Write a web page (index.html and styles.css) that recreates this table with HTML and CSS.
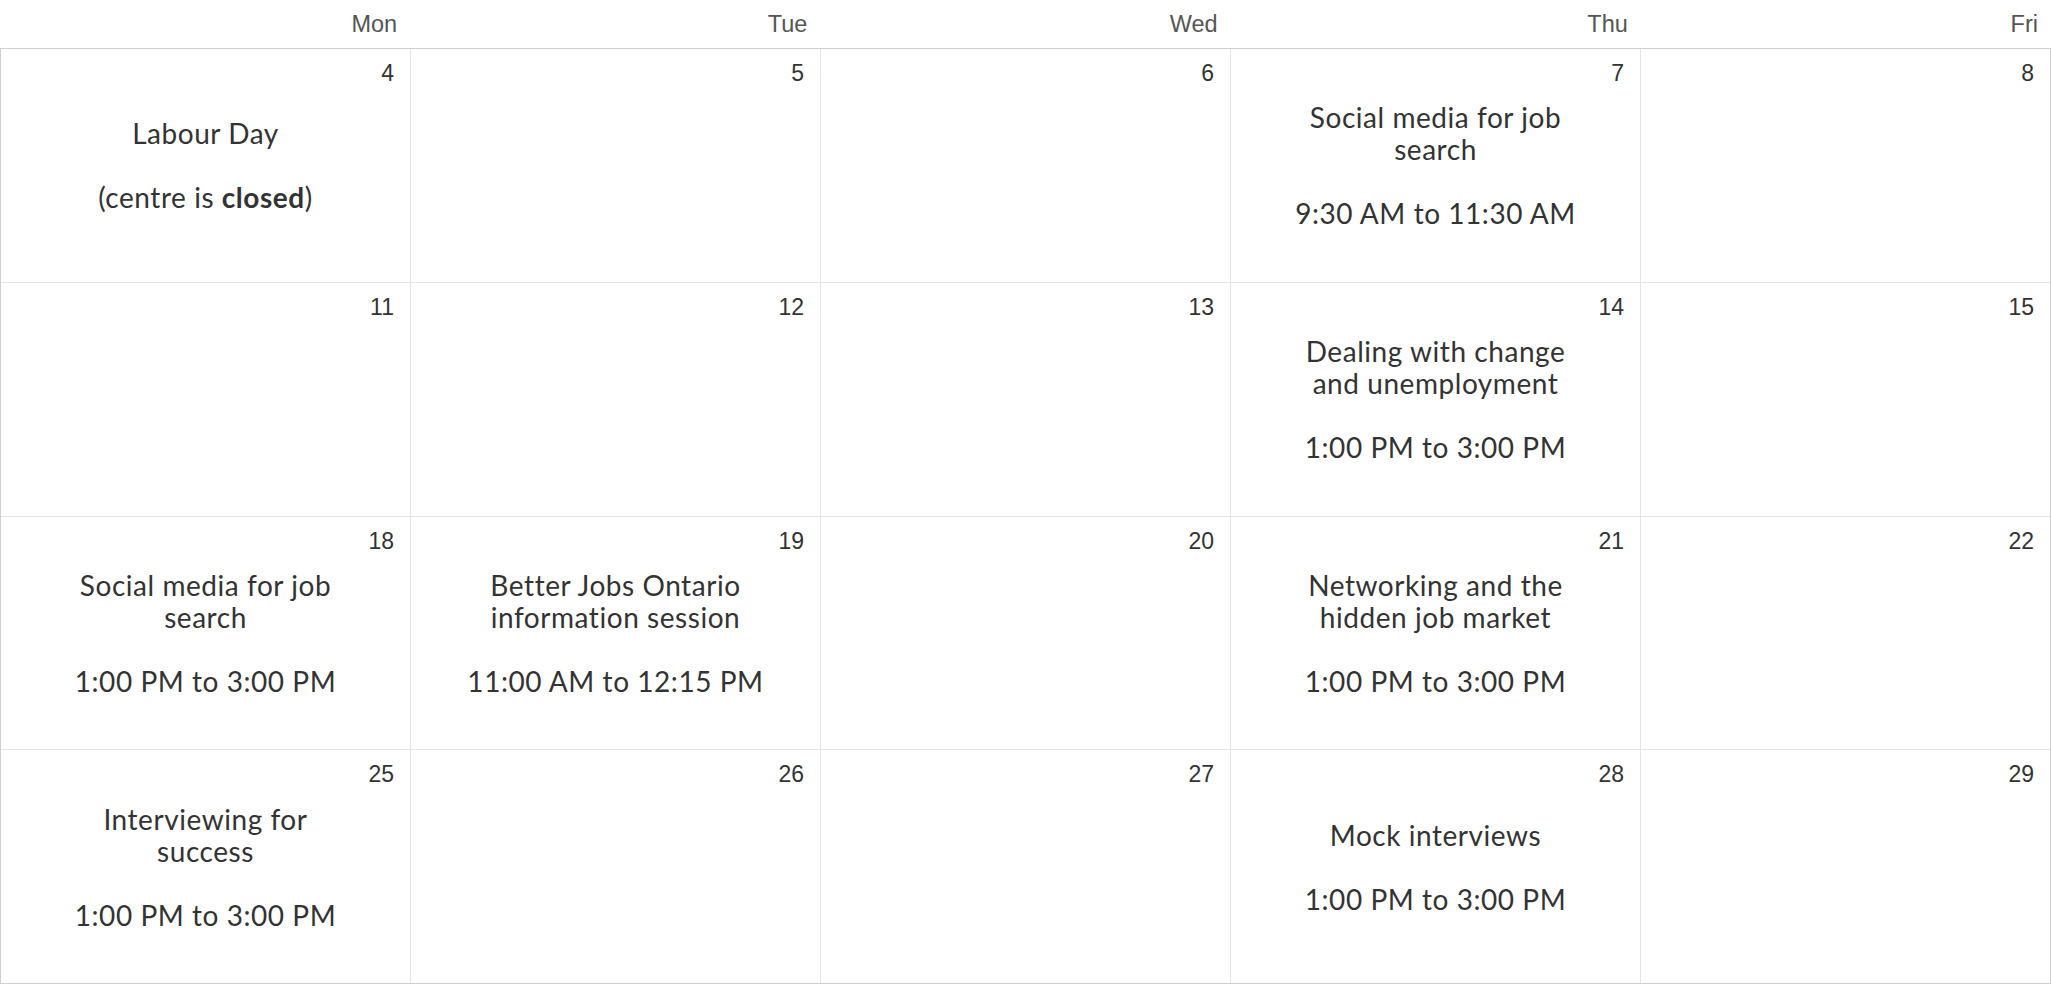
FILE: index.html
```html
<!DOCTYPE html>
<html lang="en">
<head>
    <meta charset="UTF-8">
    <title>September Workshops</title>
    <link rel="stylesheet" href="styles.css">
</head>
<body>
    <div class="weekdays">
        <div class="weekday">Mon</div>
        <div class="weekday">Tue</div>
        <div class="weekday">Wed</div>
        <div class="weekday">Thu</div>
        <div class="weekday">Fri</div>
    </div>

    <div class="calendar">
        <div class="day">
            <span class="date">4</span>
            <div class="event">
                <p>Labour Day</p>
                <p>(centre is <strong>closed</strong>)</p>
            </div>
        </div>
        <div class="day"><span class="date">5</span></div>
        <div class="day"><span class="date">6</span></div>
        <div class="day">
            <span class="date">7</span>
            <div class="event">
                <p>Social media for job search</p>
                <p>9:30 AM to 11:30 AM</p>
            </div>
        </div>
        <div class="day"><span class="date">8</span></div>

        <div class="day"><span class="date">11</span></div>
        <div class="day"><span class="date">12</span></div>
        <div class="day"><span class="date">13</span></div>
        <div class="day">
            <span class="date">14</span>
            <div class="event">
                <p>Dealing with change and unemployment</p>
                <p>1:00 PM to 3:00 PM</p>
            </div>
        </div>
        <div class="day"><span class="date">15</span></div>

        <div class="day">
            <span class="date">18</span>
            <div class="event">
                <p>Social media for job search</p>
                <p>1:00 PM to 3:00 PM</p>
            </div>
        </div>
        <div class="day">
            <span class="date">19</span>
            <div class="event">
                <p>Better Jobs Ontario information session</p>
                <p>11:00 AM to 12:15 PM</p>
            </div>
        </div>
        <div class="day"><span class="date">20</span></div>
        <div class="day">
            <span class="date">21</span>
            <div class="event">
                <p>Networking and the hidden job market</p>
                <p>1:00 PM to 3:00 PM</p>
            </div>
        </div>
        <div class="day"><span class="date">22</span></div>

        <div class="day">
            <span class="date">25</span>
            <div class="event">
                <p>Interviewing for success</p>
                <p>1:00 PM to 3:00 PM</p>
            </div>
        </div>
        <div class="day"><span class="date">26</span></div>
        <div class="day"><span class="date">27</span></div>
        <div class="day">
            <span class="date">28</span>
            <div class="event">
                <p>Mock interviews</p>
                <p>1:00 PM to 3:00 PM</p>
            </div>
        </div>
        <div class="day"><span class="date">29</span></div>
    </div>
</body>
</html>
```

FILE: styles.css
```css
body {
    margin: 0;
    padding: 0;
    background: #fff;
    color: #333;
    font-family: Lato, "Noto Sans", sans-serif;
}
.weekdays {
    display: grid;
    grid-template-columns: repeat(5, 1fr);
    height: 48px;
}
.weekday {
    padding: 11px 13px 10px;
    text-align: right;
    font-family: "Liberation Sans", Arial, sans-serif;
    font-size: 23.5px;
    line-height: 27px;
    color: #555;
}
.calendar {
    display: grid;
    grid-template-columns: repeat(5, 1fr);
    grid-template-rows: repeat(4, 1fr);
    gap: 1px;
    height: 936px;
    box-sizing: border-box;
    border: 1px solid #cfcfcf;
    background: #e4e4e4;
}
.day {
    display: grid;
    grid-template-areas: "cell";
    background: #fff;
}
.date {
    grid-area: cell;
    align-self: start;
    justify-self: end;
    padding: 11px 16px 0 0;
    font-family: "Liberation Sans", Arial, sans-serif;
    font-size: 23px;
    line-height: 26px;
    color: #333;
}
.event {
    grid-area: cell;
    align-self: center;
    justify-self: center;
    max-width: 302px;
    text-align: center;
    font-size: 28px;
    line-height: 32px;
    letter-spacing: 0.55px;
}
.event p {
    margin: 0;
}
.event p + p {
    margin-top: 32px;
}
```
